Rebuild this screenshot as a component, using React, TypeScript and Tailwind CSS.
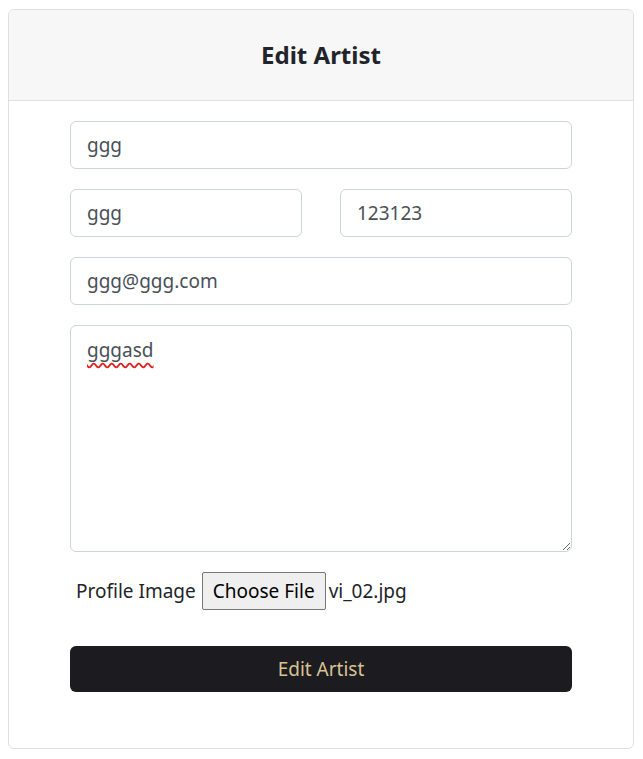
export default function App() {
  const font = { fontFamily: '"Segoe UI", "Noto Sans", "Open Sans", sans-serif' };
  return (
    <div className="bg-white min-h-screen pt-[9px]" style={font}>
      <div className="ml-2 w-[626px] border border-[#dfdfdf] rounded-md overflow-hidden">
        <div className="h-[91px] bg-[#f7f7f7] border-b border-[#dfdfdf] flex items-center justify-center">
          <h4 className="text-[24px] font-bold text-[#212529]">Edit Artist</h4>
        </div>
        <form className="px-[61px] pt-5 pb-[56px] flex flex-col gap-[20px] text-[19px] text-[#495057]">
          <input
            defaultValue="ggg"
            className="h-[48px] w-full border border-[#ced4da] rounded-md px-4 outline-none"
          />
          <div className="flex gap-[38px]">
            <input
              defaultValue="ggg"
              className="h-[48px] w-[232px] border border-[#ced4da] rounded-md px-4 outline-none"
            />
            <input
              defaultValue="123123"
              className="h-[48px] w-[232px] border border-[#ced4da] rounded-md px-4 outline-none"
            />
          </div>
          <input
            defaultValue="ggg@ggg.com"
            className="h-[48px] w-full border border-[#ced4da] rounded-md px-4 outline-none"
          />
          <div className="h-[227px] w-full border border-[#ced4da] rounded-md px-4 py-[10px] resize overflow-auto">
            <span className="underline decoration-wavy decoration-[#e02020] underline-offset-[5px] [text-decoration-skip-ink:none]">
              gggasd
            </span>
          </div>
          <div className="flex items-center h-[38px] pl-[6px] text-[#212529]">
            <span className="mr-[6px]">Profile Image</span>
            <span className="h-[38px] px-[10px] flex items-center bg-[#efefef] border border-[#767676] rounded-[2px] text-black">
              Choose File
            </span>
            <span className="ml-[3px]">vi_02.jpg</span>
          </div>
          <button
            type="button"
            className="mt-[16px] h-[46px] w-full rounded-md bg-[#1c1b20] text-[#d8c393] text-[19px]"
          >
            Edit Artist
          </button>
        </form>
      </div>
    </div>
  );
}
